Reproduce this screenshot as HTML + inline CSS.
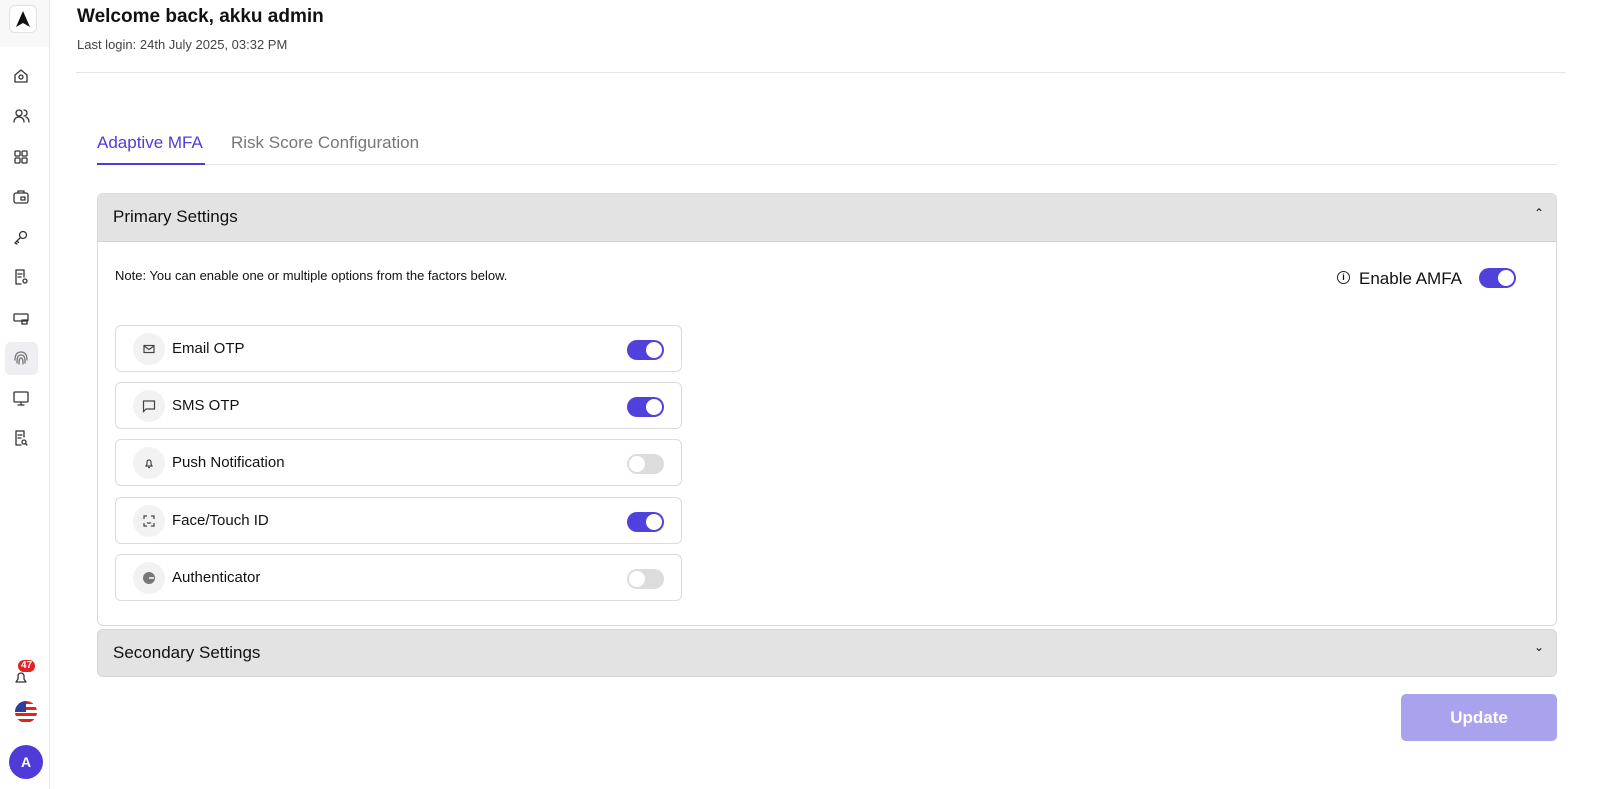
<!DOCTYPE html>
<html><head><style>
*{box-sizing:border-box;margin:0;padding:0}
body{width:1600px;height:789px;overflow:hidden;background:#fff;font-family:"Liberation Sans",sans-serif;color:#111;position:relative}
.abs{position:absolute}
.side{left:0;top:0;width:50px;height:789px;border-right:1px solid #e8e8ec}
.ic{position:absolute;left:11px;width:20px;height:20px}
.ic svg{width:20px;height:20px;fill:none;stroke:#333;stroke-width:1.3;stroke-linecap:round;stroke-linejoin:round}
.tog{position:absolute;width:37px;height:20px;border-radius:10px;background:#5040dc}
.tog::after{content:"";position:absolute;top:2px;right:2px;width:16px;height:16px;border-radius:50%;background:#fff}
.tog.off{background:#dcdcdc}.tog.off::after{right:auto;left:2px}
.row{position:absolute;left:115px;width:567px;height:47px;border:1px solid #dcdce0;border-radius:6px}
.row .c{position:absolute;left:17px;top:7px;width:32px;height:32px;border-radius:50%;background:#f2f2f3}
.row .c svg{position:absolute;left:9px;top:9px;width:14px;height:14px;fill:none;stroke:#444;stroke-width:1.2}
.row .t{position:absolute;left:56px;top:14px;font-size:15px}
.row .tog{left:511px;top:14px}
</style></head><body>
<div class="abs side">
 <div class="abs" style="left:0;top:0;width:49px;height:47px;background:#f8f8f9"></div>
 <div class="abs" style="left:9px;top:5px;width:28px;height:28px;border:1px solid #e2e2e2;border-radius:6px;background:#fff"><svg width="26" height="26" viewBox="0 0 26 26"><path d="M13 5 L20 21 L13 17 L6 21Z" fill="#111"/></svg></div>
 <div class="abs" style="left:5px;top:342px;width:33px;height:33px;border-radius:6px;background:#eeeef3"></div>
 <div class="ic" style="top:66px"><svg viewBox="0 0 20 20"><path d="M4 9 L10 4 L16 9 V16 H4Z"/><circle cx="10" cy="11" r="2"/></svg></div>
 <div class="ic" style="top:106px"><svg viewBox="0 0 20 20"><circle cx="8" cy="7" r="3"/><path d="M3 16c0-3 2-5 5-5s5 2 5 5M13 4a3 3 0 0 1 0 6M15 11c2 1 3 3 3 5"/></svg></div>
 <div class="ic" style="top:147px"><svg viewBox="0 0 20 20"><rect x="4" y="4" width="5" height="5" rx="1"/><rect x="11" y="4" width="5" height="5" rx="1"/><rect x="4" y="11" width="5" height="5" rx="1"/><rect x="11" y="11" width="5" height="5" rx="1"/></svg></div>
 <div class="ic" style="top:187px"><svg viewBox="0 0 20 20"><rect x="3" y="6" width="14" height="10" rx="2"/><path d="M7 6V4h6v2"/><rect x="10" y="10" width="4" height="3"/></svg></div>
 <div class="ic" style="top:227px"><svg viewBox="0 0 20 20"><circle cx="12" cy="8" r="3.5"/><path d="M9.5 10.5 L4 16 L6 17 M6 14 L7.5 15.5"/></svg></div>
 <div class="ic" style="top:267px"><svg viewBox="0 0 20 20"><path d="M13 10V3H5v14h5"/><path d="M7 7h4M7 10h3"/><circle cx="14" cy="14" r="2"/></svg></div>
 <div class="ic" style="top:308px"><svg viewBox="0 0 20 20"><rect x="3" y="6" width="14" height="7" rx="1"/><rect x="11" y="12" width="5" height="4"/></svg></div>
 <div class="ic" style="top:348px"><svg viewBox="0 0 20 20" style="stroke:#777"><path d="M6 15c0-4 0-8 4-8s4 4 4 8M8 16c0-3 0-6 2-6s2 3 2 6M4 12c0-5 2-8 6-8s6 3 6 8"/></svg></div>
 <div class="ic" style="top:388px"><svg viewBox="0 0 20 20"><rect x="3" y="4" width="14" height="10" rx="1"/><path d="M10 14v3M7 17h6"/></svg></div>
 <div class="ic" style="top:428px"><svg viewBox="0 0 20 20"><path d="M13 9V3H5v14h5"/><path d="M7 7h4M7 10h3"/><circle cx="13" cy="14" r="2"/><path d="M14.5 15.5 L16 17"/></svg></div>
 <div class="abs" style="left:18px;top:660px;font-size:10px;font-weight:bold;color:#fff;background:#e02424;border-radius:7px;padding:0 3px;line-height:12px">47</div>
 <div class="ic" style="top:668px"><svg viewBox="0 0 20 20"><path d="M5 14h10l-2-3V8a3 3 0 0 0-6 0v3Z"/></svg></div>
 <div class="abs" style="left:15px;top:701px;width:22px;height:22px;border-radius:50%;overflow:hidden;background:repeating-linear-gradient(#e02424 0 3px,#fff 3px 6px)"><div style="width:11px;height:11px;background:#2b3f9e"></div></div>
 <div class="abs" style="left:9px;top:745px;width:34px;height:34px;border-radius:50%;background:#4f3cd8;color:#fff;font-size:14px;text-align:center;line-height:34px;font-weight:bold">A</div>
</div>
<div class="abs" style="left:77px;top:6px;font-size:19px;font-weight:bold">Welcome back, akku admin</div>
<div class="abs" style="left:77px;top:37px;font-size:13px;color:#444">Last login: 24th July 2025, 03:32 PM</div>
<div class="abs" style="left:76px;top:72px;width:1490px;height:1px;background:#e4e4e4"></div>
<div class="abs" style="left:97px;top:133px;font-size:17px;color:#4f3cd8">Adaptive MFA</div>
<div class="abs" style="left:231px;top:133px;font-size:17px;color:#777">Risk Score Configuration</div>
<div class="abs" style="left:97px;top:164px;width:1460px;height:1px;background:#e6e6e6"></div>
<div class="abs" style="left:97px;top:163px;width:108px;height:2px;background:#4f3cd8"></div>
<div class="abs" style="left:97px;top:193px;width:1460px;height:433px;border:1px solid #dadade;border-radius:6px;overflow:hidden">
 <div style="height:48px;background:#e3e3e3;border-bottom:1px solid #d2d2d6;font-size:17px;padding:13px 0 0 15px">Primary Settings<span style="position:absolute;right:12px;top:12px;font-size:12px">&#8963;</span></div>
</div>
<div class="abs" style="left:115px;top:268px;font-size:13px">Note: You can enable one or multiple options from the factors below.</div>
<div class="abs" style="left:1337px;top:271px;width:13px;height:13px;border:1.3px solid #222;border-radius:50%;font-size:9px;text-align:center;line-height:11px;font-weight:bold">i</div>
<div class="abs" style="left:1359px;top:269px;font-size:17px">Enable AMFA</div>
<div class="tog" style="left:1479px;top:268px"></div>
<div class="row" style="top:325px"><div class="c"><svg viewBox="0 0 14 14"><rect x="2" y="3.5" width="10" height="7"/><path d="M2 4l5 3.5 5-3.5"/></svg></div><div class="t">Email OTP</div><div class="tog"></div></div>
<div class="row" style="top:382px"><div class="c"><svg viewBox="0 0 14 14"><path d="M1.5 2h11v8H4l-2.5 2.5Z"/></svg></div><div class="t">SMS OTP</div><div class="tog"></div></div>
<div class="row" style="top:439px"><div class="c"><svg viewBox="0 0 14 14"><path d="M4 10h6l-1-2V6a2 2 0 0 0-4 0v2ZM6 11.5h2"/></svg></div><div class="t">Push Notification</div><div class="tog off"></div></div>
<div class="row" style="top:497px"><div class="c"><svg viewBox="0 0 14 14"><path d="M2 5V2h3M9 2h3v3M12 9v3H9M5 12H2V9M5 8.5c1 1 3 1 4 0"/></svg></div><div class="t">Face/Touch ID</div><div class="tog"></div></div>
<div class="row" style="top:554px"><div class="c"><svg viewBox="0 0 14 14" style="stroke:none"><circle cx="7" cy="7" r="6" fill="#777"/><rect x="7" y="6" width="5" height="2" fill="#ddd"/></svg></div><div class="t">Authenticator</div><div class="tog off"></div></div>
<div class="abs" style="left:97px;top:629px;width:1460px;height:48px;background:#e3e3e3;border:1px solid #d6d6da;border-radius:6px;font-size:17px;padding:13px 0 0 15px">Secondary Settings<span style="position:absolute;right:12px;top:10px;font-size:12px">&#8964;</span></div>
<div class="abs" style="left:1401px;top:694px;width:156px;height:47px;border-radius:5px;background:#a9a2ec;color:#fff;font-size:17px;font-weight:bold;text-align:center;line-height:47px">Update</div>
</body></html>
